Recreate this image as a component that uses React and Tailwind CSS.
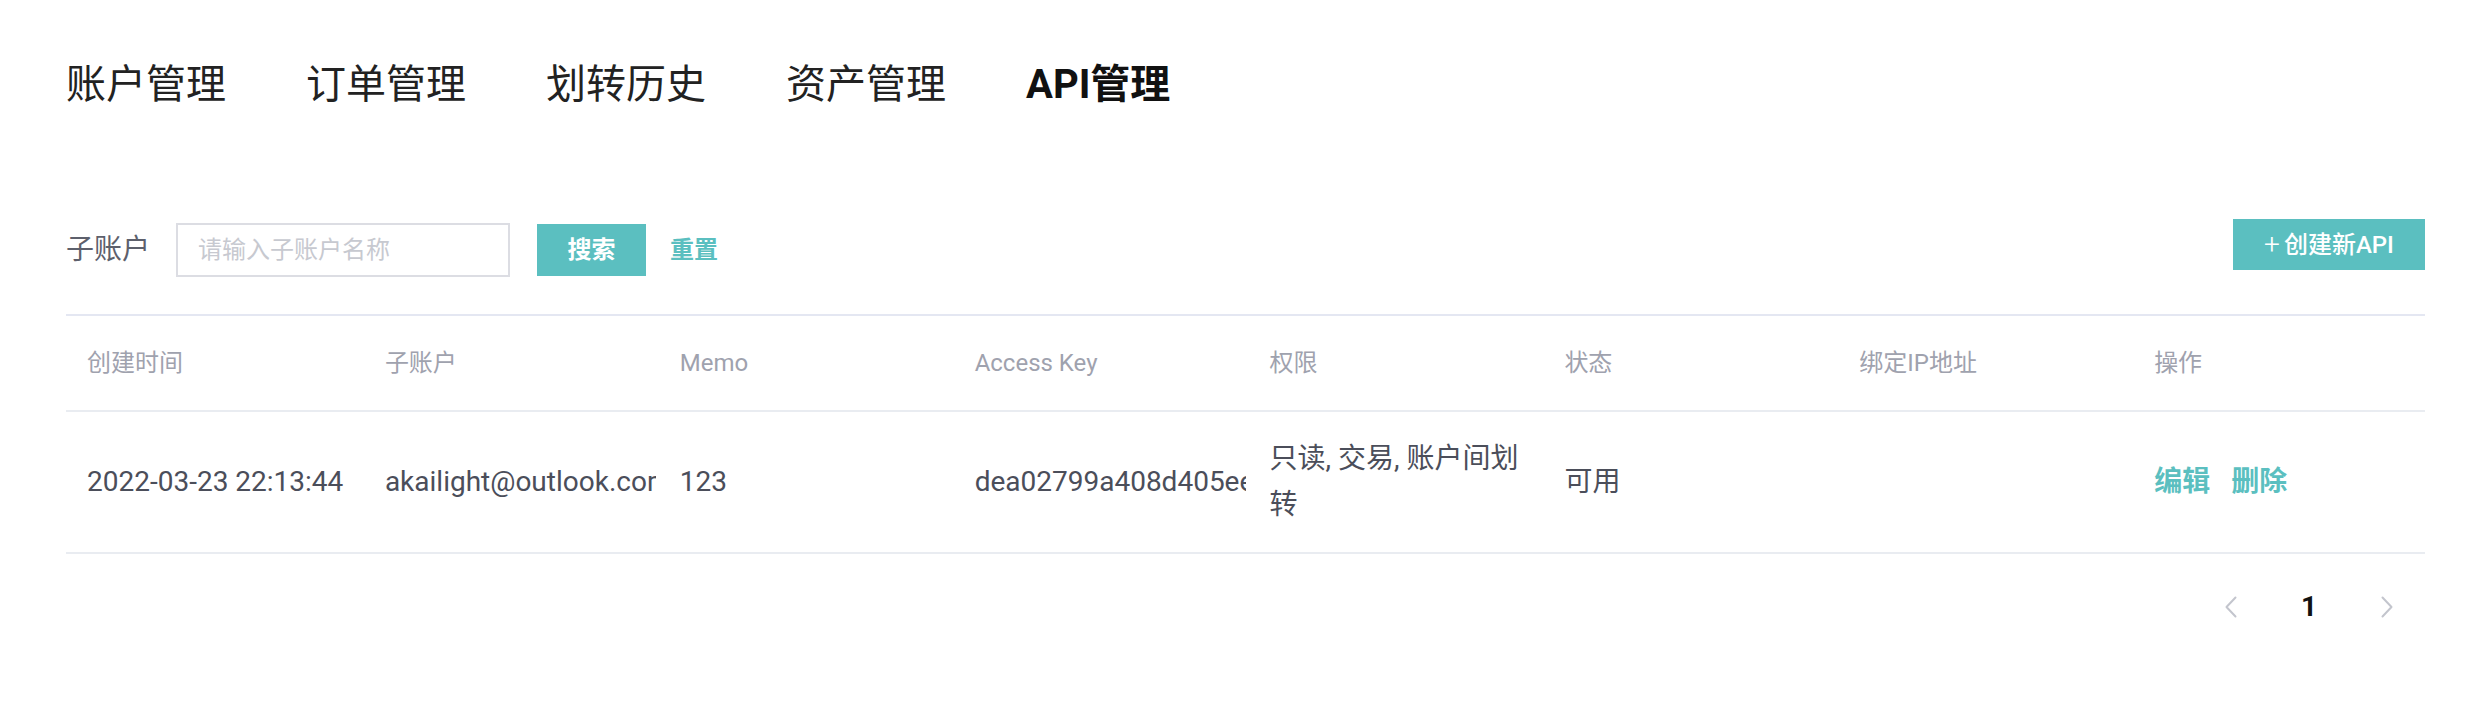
import React from 'react';

const tabs = ['账户管理', '订单管理', '划转历史', '资产管理', 'API管理'];
const columns = ['创建时间', '子账户', 'Memo', 'Access Key', '权限', '状态', '绑定IP地址', '操作'];

const Chevron = ({ dir }) => (
  <svg width="12" height="22" viewBox="0 0 12 22" fill="none">
    <path
      d={dir === 'left' ? 'M10.5 1.5 1.5 11l9 9.5' : 'M1.5 1.5l9 9.5-9 9.5'}
      stroke="#c3c5cd"
      strokeWidth="2"
      strokeLinecap="round"
      strokeLinejoin="round"
    />
  </svg>
);

export default function App() {
  return (
    <div className="min-h-[720px] w-full bg-white pl-[66px] pr-[51px] font-[Roboto,'Noto_Sans_CJK_SC',sans-serif]">
      {/* Tabs */}
      <div className="flex gap-[80px] pt-[65px]">
        {tabs.map((t, i) => (
          <div
            key={t}
            className={
              i === tabs.length - 1
                ? 'text-[40px] leading-[40px] font-bold text-[#111]'
                : 'text-[40px] leading-[40px] text-[#222]'
            }
          >
            {t}
          </div>
        ))}
      </div>

      {/* Filter */}
      <div className="mt-[114px] flex items-start justify-between">
        <div className="mt-[4px] flex h-[54px] items-center">
          <span className="text-[28px] text-[#5d606c]">子账户</span>
          <input
            placeholder="请输入子账户名称"
            className="ml-[26px] h-[54px] w-[334px] border-2 border-[#dcdde3] px-[20px] text-[24px] outline-none placeholder:text-[#c7c9d0]"
          />
          <button className="ml-[27px] h-[52px] w-[109px] bg-[#5bbfc0] text-[24px] font-bold text-white">
            搜索
          </button>
          <button className="ml-[24px] text-[24px] font-bold text-[#5bbfc0]">重置</button>
        </div>
        <button className="flex h-[51px] w-[192px] items-center justify-center bg-[#5bbfc0] text-[24px] font-medium text-white">
          <span className="mr-[4px] text-[28px] font-light leading-none">+</span>创建新API
        </button>
      </div>

      {/* Table */}
      <div className="mt-[37px]">
        <div className="grid h-[98px] grid-cols-8 items-center border-y-2 border-t-[#e4e7f2] border-b-[#e9ecf1]">
          {columns.map((c, i) => (
            <div
              key={c}
              className={`${i === 0 ? 'pl-[21px]' : 'pl-[24px]'} overflow-hidden whitespace-nowrap text-[24px] text-[#9fa2ae]`}
            >
              {c}
            </div>
          ))}
        </div>
        <div className="grid grid-cols-8 items-center border-b-2 border-[#e9ecf1] py-[24px] text-[28px] leading-[46px] text-[#4b4e5a]">
          <div className="overflow-hidden whitespace-nowrap pl-[21px]">2022-03-23 22:13:44</div>
          <div className="overflow-hidden whitespace-nowrap pl-[24px]">akailight@outlook.com</div>
          <div className="overflow-hidden whitespace-nowrap pl-[24px]">123</div>
          <div className="overflow-hidden whitespace-nowrap pl-[24px]">dea02799a408d405ee1c7b2</div>
          <div className="pl-[24px] pr-[10px]">只读, 交易, 账户间划转</div>
          <div className="pl-[24px]">可用</div>
          <div className="pl-[24px]"></div>
          <div className="flex gap-[21px] pl-[24px] font-bold text-[#5bbfc0]">
            <span>编辑</span>
            <span>删除</span>
          </div>
        </div>
      </div>

      {/* Pagination */}
      <div className="mt-[21px] flex justify-end gap-[14px] pr-[6px]">
        <div className="flex h-[64px] w-[64px] items-center justify-center">
          <Chevron dir="left" />
        </div>
        <div className="flex h-[64px] w-[64px] items-center justify-center text-[28px] font-bold text-[#111]">1</div>
        <div className="flex h-[64px] w-[64px] items-center justify-center">
          <Chevron dir="right" />
        </div>
      </div>
    </div>
  );
}
